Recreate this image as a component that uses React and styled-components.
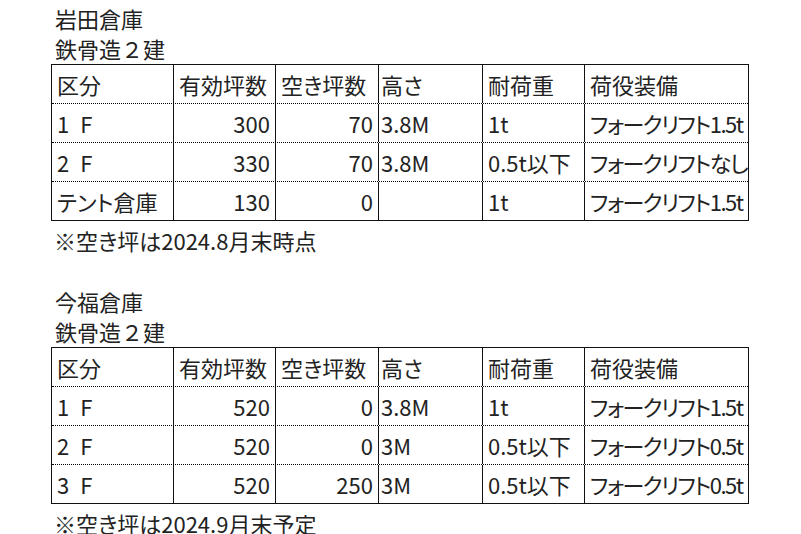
import React from 'react';
import styled, { createGlobalStyle } from 'styled-components';

const GlobalStyle = createGlobalStyle`
  html, body {
    margin: 0;
    padding: 0;
    background: #ffffff;
  }
  body {
    font-family: 'Noto Sans CJK JP', 'Noto Sans', sans-serif;
    font-feature-settings: 'palt';
    color: #222222;
  }
`;

const Page = styled.div`
  width: 801px;
  height: 534px;
  padding: 3px 0 0 51px;
  box-sizing: border-box;
  overflow: hidden;
`;

const Section = styled.section`
  margin-top: ${(p) => p.$gap || 0}px;
`;

const Line = styled.div`
  font-size: 22px;
  line-height: 30px;
  height: ${(p) => p.$h || 30}px;
  padding-left: 4px;
  white-space: nowrap;
`;

const Title = styled(Line)`
  font-feature-settings: normal;
`;

const Note = styled(Line)`
  line-height: 38px;
  padding-left: 3px;
`;

const Grid = styled.div`
  width: 698px;
  box-sizing: border-box;
  border: 1px solid #111111;
  font-size: 22px;
`;

const Row = styled.div`
  display: grid;
  grid-template-columns: 121px 102px 103px 104px 102px 1fr;
  height: ${(p) => (p.$head ? 38 : 38)}px;
  border-top: ${(p) => (p.$head ? 'none' : '1px dotted #000000')};
`;

const Cell = styled.div`
  display: flex;
  align-items: center;
  justify-content: ${(p) => (p.$num ? 'flex-end' : 'flex-start')};
  padding: 0 ${(p) => (p.$num ? 5 : 2)}px 0 ${(p) => (p.$tight ? 2 : 5)}px;
  border-left: ${(p) => (p.$first ? 'none' : '1px solid #111111')};
  letter-spacing: ${(p) => p.$squeeze || 0}px;
  white-space: nowrap;
  overflow: hidden;
  line-height: 1;
`;

const header = ['区分', '有効坪数', '空き坪数', '高さ', '耐荷重', '荷役装備'];

function Warehouse({ name, rows, note, gap }) {
  return (
    <Section $gap={gap}>
      <Title>{name}</Title>
      <Title $h={31}>鉄骨造２建</Title>
      <Grid>
        <Row $head>
          {header.map((h, i) => (
            <Cell key={h} $first={i === 0} $tight={i === 3}>
              {h}
            </Cell>
          ))}
        </Row>
        {rows.map((r) => (
          <Row key={r[0]}>
            <Cell $first>{r[0]}</Cell>
            <Cell $num>{r[1]}</Cell>
            <Cell $num>{r[2]}</Cell>
            <Cell $tight>{r[3]}</Cell>
            <Cell>{r[4]}</Cell>
            <Cell $squeeze={-1.5}>{r[5]}</Cell>
          </Row>
        ))}
      </Grid>
      <Note $h={38}>{note}</Note>
    </Section>
  );
}

const iwata = [
  ['1\u2002F', '300', '70', '3.8M', '1t', 'フォークリフト1.5t'],
  ['2\u2002F', '330', '70', '3.8M', '0.5t以下', 'フォークリフトなし'],
  ['テント倉庫', '130', '0', '', '1t', 'フォークリフト1.5t'],
];

const imafuku = [
  ['1\u2002F', '520', '0', '3.8M', '1t', 'フォークリフト1.5t'],
  ['2\u2002F', '520', '0', '3M', '0.5t以下', 'フォークリフト0.5t'],
  ['3\u2002F', '520', '250', '3M', '0.5t以下', 'フォークリフト0.5t'],
];

export default function App() {
  return (
    <>
      <GlobalStyle />
      <Page>
        <Warehouse name="岩田倉庫" rows={iwata} note="※空き坪は2024.8月末時点" />
        <Warehouse name="今福倉庫" rows={imafuku} note="※空き坪は2024.9月末予定" gap={27} />
      </Page>
    </>
  );
}
